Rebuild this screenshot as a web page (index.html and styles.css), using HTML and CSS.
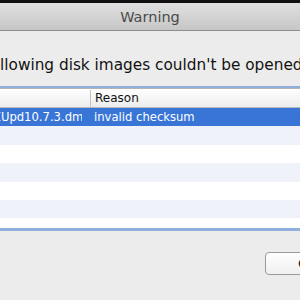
FILE: index.html
```html
<!DOCTYPE html>
<html>
<head>
<meta charset="utf-8">
<link rel="stylesheet" href="styles.css">
</head>
<body>
<div class="window">
  <div class="topbar"></div>
  <div class="titlebar">Warning</div>
  <div class="content">
    <p class="message">The following disk images couldn't be opened:</p>
    <div class="table">
      <div class="header">
        <div class="cell name">Name</div>
        <div class="cell reason">Reason</div>
      </div>
      <div class="row selected">
        <div class="cell name"><span class="clip">MacOSXUpd10.7.3.dmg</span></div>
        <div class="cell reason">invalid checksum</div>
      </div>
      <div class="row alt"></div>
      <div class="row"></div>
      <div class="row alt"></div>
      <div class="row"></div>
      <div class="row alt"></div>
      <div class="row"></div>
    </div>
    <div class="buttons">
      <button class="btn">Cancel</button>
    </div>
  </div>
</div>
</body>
</html>
```
FILE: styles.css
```css
html, body {
  margin: 0;
  padding: 0;
  width: 300px;
  height: 300px;
  overflow: hidden;
  background: #ececec;
  font-family: "DejaVu Sans", sans-serif;
}
.window {
  width: 500px;
  margin-left: -100px;
}
.topbar {
  height: 3px;
  background: #111;
}
.titlebar {
  height: 26px;
  padding-top: 1px;
  line-height: 27px;
  text-align: center;
  font-size: 14.5px;
  color: #4a4a4a;
  background: linear-gradient(#e0e0e0, #c6c6c6);
  border-bottom: 1px solid #8e8e8e;
}
.content {
  padding: 0 16px;
}
.message {
  margin: 25px 0 12px;
  padding-left: 36px;
  font-size: 15.3px;
  line-height: 18px;
  color: #111;
  white-space: nowrap;
}
.table {
  border: 3px solid #8fb0dc;
  border-top-width: 2px;
  background: #fff;
  height: 140px;
  overflow: hidden;
}
.header {
  display: grid;
  grid-template-columns: 171px 1fr;
  height: 20px;
  padding-top: 1px;
  background: linear-gradient(#ffffff, #ececec);
  border-top: 1px solid #b4b4b4;
  border-bottom: 1px solid #b8b8b8;
  box-sizing: border-box;
}
.header .cell {
  line-height: 17px;
  font-size: 12px;
  color: #111;
}
.header .reason {
  border-left: 1px solid #c2c2c2;
}
.header .name {
  color: transparent;
}
.row {
  display: grid;
  grid-template-columns: 171px 1fr;
  height: 18.4px;
  font-size: 11.6px;
  line-height: 18px;
}
.row.alt {
  background: #eff3f9;
}
.row.selected {
  background: #3875d7;
  color: #fff;
}
.cell {
  overflow: hidden;
  white-space: nowrap;
}
.name {
  padding-left: 34px;
}
.clip {
  display: block;
  width: 129px;
  overflow: hidden;
}
.reason {
  padding-left: 4px;
}
.buttons {
  margin-top: 21px;
  padding-left: 349px;
}
.btn {
  height: 23px;
  padding: 0 32px;
  border: 1px solid #9a9a9a;
  border-radius: 4px;
  background: linear-gradient(#ffffff, #f0f0f0);
  font-family: "DejaVu Sans", sans-serif;
  font-size: 13px;
  color: #1a1a1a;
}
```
